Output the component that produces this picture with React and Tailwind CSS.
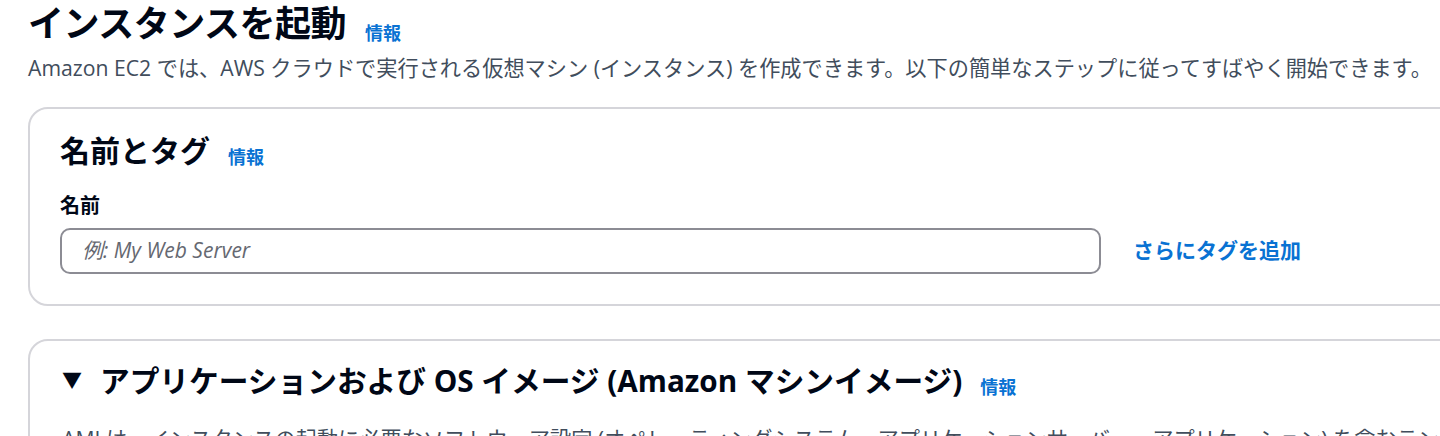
import React from "react";

const FONT = { fontFamily: '"Open Sans", "Noto Sans CJK JP", sans-serif' };

function Info({ className = "" }) {
  return (
    <span className={`text-[#0972d3] font-bold text-[18px] leading-none ${className}`}>情報</span>
  );
}

export default function App() {
  return (
    <div className="w-[1440px] h-[436px] overflow-hidden bg-white text-[#000716]" style={FONT}>
      <div className="pl-[28px] pt-[4px]">
        <div className="flex items-end gap-[19px] h-[40px]">
          <h1 className="text-[36px] leading-[40px] font-bold tracking-[-0.5px]">インスタンスを起動</h1>
          <Info className="mb-[2px]" />
        </div>
        <p className="mt-[10px] text-[21.2px] leading-[28px] text-[#414d5c] whitespace-nowrap">
          Amazon EC2 では、AWS クラウドで実行される仮想マシン (インスタンス) を作成できます。以下の簡単なステップに従ってすばやく開始できます。
        </p>

        <section className="mt-[25px] w-[1460px] rounded-[20px] border-2 border-[#d5d5da] pl-[30px] pt-[24px] pb-[30px]">
          <div className="flex items-end gap-[18px]">
            <h2 className="text-[30px] leading-[36px] font-bold">名前とタグ</h2>
            <Info className="mb-[3px]" />
          </div>
          <div className="mt-[25px] text-[20px] leading-[24px] font-bold">名前</div>
          <div className="mt-[10px] flex items-center gap-[32px]">
            <div className="w-[1041px] h-[46px] rounded-[10px] border-2 border-[#8c8c94] flex items-center pl-[20px]">
              <span className="italic text-[21px] text-[#656871]">例: My Web Server</span>
            </div>
            <span className="text-[#0972d3] font-bold text-[21px]">さらにタグを追加</span>
          </div>
        </section>

        <section className="mt-[33px] w-[1460px] rounded-[20px] border-2 border-[#d5d5da] pl-[32px] pt-[22px]">
          <div className="flex items-end">
            <span className="text-[20px] leading-[36px] mr-[18px]">▼</span>
            <h2 className="text-[29.7px] leading-[36px] font-bold whitespace-nowrap">
              アプリケーションおよび OS イメージ (Amazon マシンイメージ)
            </h2>
            <Info className="ml-[18px] mb-[3px]" />
          </div>
          <p className="mt-[26px] text-[21.2px] leading-[28px] text-[#414d5c] whitespace-nowrap">
            AMI は、インスタンスの起動に必要なソフトウェア設定 (オペレーティングシステム、アプリケーションサーバー、アプリケーション) を含むテンプレートです。
          </p>
        </section>
      </div>
    </div>
  );
}
